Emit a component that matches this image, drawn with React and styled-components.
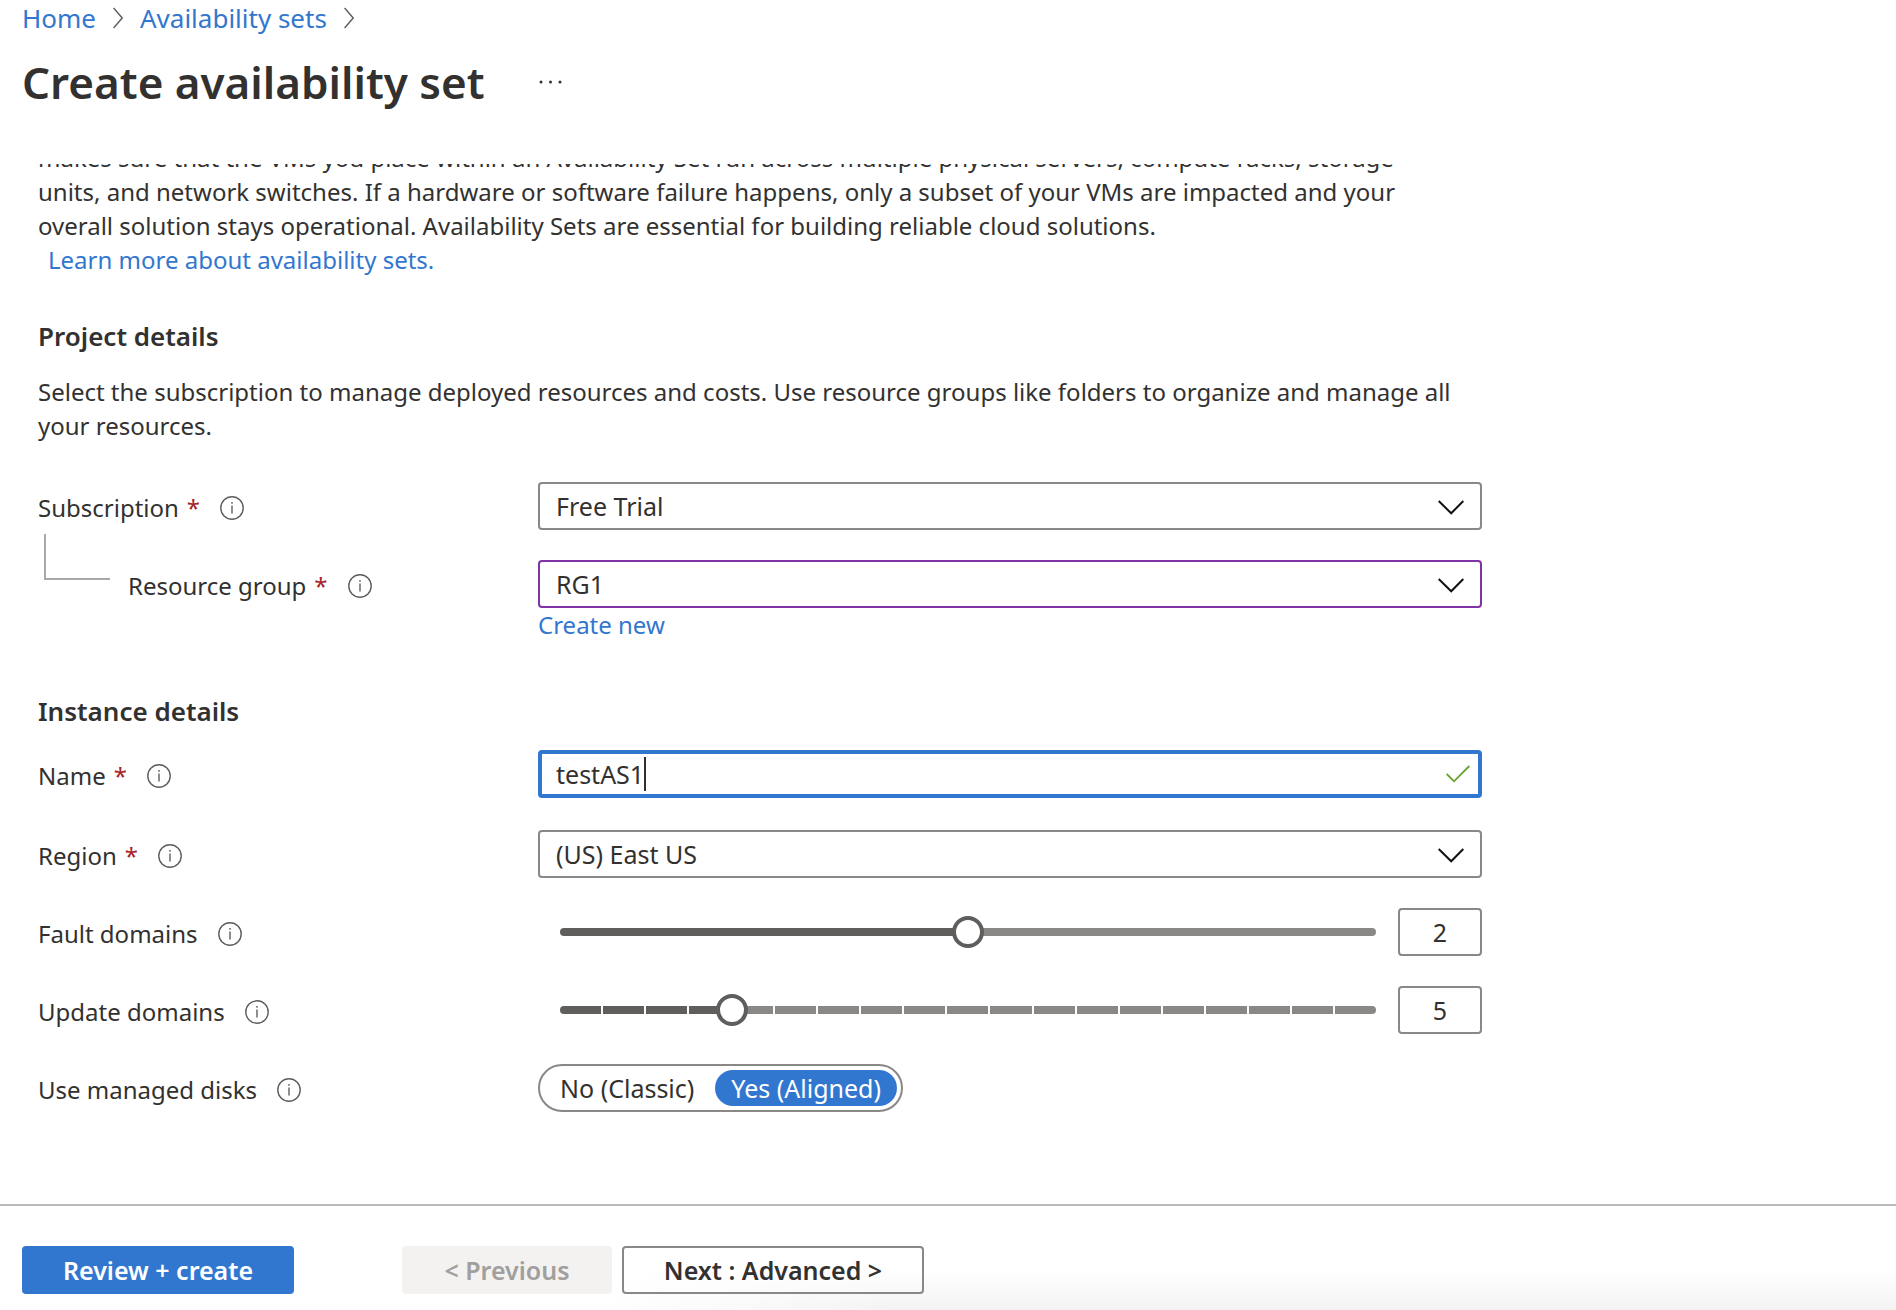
import React, { useState } from "react";
import styled, { createGlobalStyle } from "styled-components";

const c = {
  text: "#323130",
  link: "#3277cf",
  border: "#8a8886",
  dark: "#605e5c",
  purple: "#8132a3",
  red: "#a4262c",
  green: "#6aa22c",
};

const GlobalStyle = createGlobalStyle`
  *, *::before, *::after { box-sizing: border-box; }
  body { margin: 0; background: #fff; }
  body, button, input, select {
    font-family: "Noto Sans", "Open Sans", "Liberation Sans", sans-serif;
    font-size: 24px;
    line-height: 34px;
    color: ${c.text};
  }
`;

const Page = styled.div`
  min-height: 100vh;
  display: flex;
  flex-direction: column;
`;

const Header = styled.header`
  padding: 1px 22px 0;
  height: 164px;
`;

const Breadcrumb = styled.nav`
  display: flex;
  align-items: center;
  gap: 17px;
  font-size: 26px;
`;

const Link = styled.a`
  color: ${c.link};
  text-decoration: none;
`;

const TitleRow = styled.div`
  display: flex;
  align-items: center;
  gap: 50px;
  margin-top: 15px;
`;

const Title = styled.h1`
  margin: 0;
  font-size: 44px;
  line-height: 64px;
  font-weight: 600;
`;

const IconButton = styled.button`
  display: flex;
  padding: 4px;
  border: 0;
  background: none;
`;

const Main = styled.main`
  flex: 1;
  overflow: hidden;
  padding: 0 38px 92px;
`;

const Form = styled.form`
  max-width: 1444px;
  margin-top: -23px;
`;

const Text = styled.p`
  margin: 0;
`;

const Intro = styled(Text)`
  max-width: 1400px;
`;

const LearnMore = styled(Link)`
  display: block;
  padding-left: 10px;
`;

const SectionTitle = styled.h2`
  margin: ${(p) => p.$top}px 0 22px;
  font-size: 26px;
  line-height: 34px;
  font-weight: 600;
`;

const Rows = styled.div`
  display: grid;
  gap: 30px;
  margin-top: ${(p) => p.$top || 0}px;
`;

const Row = styled.div`
  display: grid;
  grid-template-columns: 500px minmax(0, 1fr);
  align-items: start;
`;

const LabelCell = styled.div`
  position: relative;
  display: flex;
  align-items: center;
  height: 48px;
  padding-top: 3px;
  padding-left: ${(p) => (p.$nested ? 90 : 0)}px;
`;

const Branch = styled.span`
  position: absolute;
  left: 6px;
  top: -26px;
  width: 66px;
  height: 46px;
  border-left: 2px solid #a8a8a8;
  border-bottom: 2px solid #a8a8a8;
`;

const Required = styled.span`
  margin-left: 8px;
  color: ${c.red};
`;

const InfoButton = styled(IconButton)`
  padding: 0;
  margin-left: 20px;
`;

const Control = styled.div`
  position: relative;
  display: flex;
  align-items: center;
  height: 48px;
  margin-bottom: ${(p) => (p.$focus ? 2 : 0)}px;
  border: ${(p) => (p.$focus ? 4 : 2)}px solid
    ${(p) => (p.$focus ? c.link : p.$edited ? c.purple : c.border)};
  border-radius: 4px;
  padding: 0 ${(p) => (p.$focus ? 8 : 0)}px 0 ${(p) => (p.$focus ? 14 : 0)}px;
`;

const Select = styled.select`
  appearance: none;
  width: 100%;
  height: 44px;
  padding: 0 60px 0 16px;
  border: 0;
  outline: 0;
  background: transparent;
  font-size: 25px;
`;

const Caret = styled.svg`
  position: absolute;
  right: 16px;
  top: 16px;
  pointer-events: none;
`;

const NameInput = styled.input`
  field-sizing: content;
  min-width: 2px;
  height: 40px;
  padding: 0;
  border: 0;
  outline: 0;
  background: none;
  font-size: 25px;
  caret-color: transparent;
`;

const Cursor = styled.span`
  width: 2px;
  height: 34px;
  background: ${c.text};
`;

const Check = styled.svg`
  margin-left: auto;
`;

const SliderRow = styled.div`
  display: flex;
  align-items: center;
  gap: 22px;
  padding-left: 22px;
`;

const Rail = styled.div`
  position: relative;
  flex: 1;
  display: flex;
  gap: ${(p) => p.$gap}px;
  height: 8px;
`;

const Segment = styled.span`
  flex: 1;
  background: ${(p) => (p.$on ? c.dark : c.border)};
  &:first-child { border-radius: 4px 0 0 4px; }
  &:nth-last-child(2) { border-radius: 0 4px 4px 0; }
`;

const Range = styled.input`
  appearance: none;
  position: absolute;
  left: -16px;
  top: -12px;
  width: calc(100% + 32px);
  height: 32px;
  margin: 0;
  background: transparent;
  &::-webkit-slider-thumb {
    appearance: none;
    width: 32px;
    height: 32px;
    border: 4px solid ${c.dark};
    border-radius: 50%;
    background: #fff;
  }
`;

const NumberInput = styled.input`
  width: 84px;
  height: 48px;
  padding: 0;
  border: 2px solid ${c.border};
  border-radius: 4px;
  text-align: center;
  font-size: 25px;
`;

const Toggle = styled.div`
  display: inline-flex;
  align-items: center;
  justify-self: start;
  gap: 5px;
  height: 48px;
  padding: 0 4px;
  border: 2px solid ${c.border};
  border-radius: 24px;
  font-size: 25px;
`;

const Option = styled.label`
  display: flex;
  align-items: center;
  height: 36px;
  padding: 0 16px;
  border-radius: 18px;
  cursor: pointer;
  &:has(:checked) { background: ${c.link}; color: #fff; }
  input {
    position: absolute;
    opacity: 0;
    width: 1px;
    height: 1px;
    margin: 0;
  }
`;

const Footer = styled.footer`
  display: flex;
  gap: 10px;
  padding: 40px 22px 16px;
  border-top: 2px solid #bababa;
  background:
    linear-gradient(to right, #fff 600px, transparent 900px),
    linear-gradient(to bottom, #fff 60%, #f3f3f3);
`;

const Button = styled.button`
  height: 48px;
  min-width: ${(p) => p.$width}px;
  padding: 0 16px;
  border: 2px solid ${c.border};
  border-radius: 4px;
  background: transparent;
  font-size: 25px;
  font-weight: 600;
  &:disabled { border-color: #f3f2f1; background: #f3f2f1; color: #a19f9d; }
`;

const PrimaryButton = styled(Button)`
  margin-right: 98px;
  border-color: ${c.link};
  background: ${c.link};
  color: #fff;
`;

const Crumb = () => (
  <svg width="10" height="22" viewBox="0 0 10 22" fill="none" stroke="#605e5c" strokeWidth="1.4" aria-hidden="true">
    <path d="M.6 1 9.2 11 .6 21" />
  </svg>
);

const Chevron = () => (
  <Caret width="26" height="15" viewBox="0 0 26 15" fill="none" stroke="#111" strokeWidth="2" aria-hidden="true">
    <path d="M.7 1 13.2 13.3 25.3 1" />
  </Caret>
);

function Label({ htmlFor, id, required, nested, children }) {
  return (
    <LabelCell $nested={nested}>
      {nested && <Branch />}
      <label htmlFor={htmlFor} id={id}>
        {children}
        {required && <Required>*</Required>}
      </label>
      <InfoButton type="button" aria-label={`About ${children}`}>
        <svg width="24" height="24" viewBox="0 0 24 24" fill="none" stroke="#605e5c" strokeWidth="1.4">
          <circle cx="12" cy="12" r="11.2" />
          <path d="M12 9.5v8M12 6v1.8" />
        </svg>
      </InfoButton>
    </LabelCell>
  );
}

function SelectRow({ id, label, value, nested, edited, children }) {
  return (
    <Row>
      <Label htmlFor={id} required nested={nested}>{label}</Label>
      <div>
        <Control $edited={edited}>
          <Select id={id} defaultValue={value}>
            <option>{value}</option>
          </Select>
          <Chevron />
        </Control>
        {children}
      </div>
    </Row>
  );
}

function SliderField({ id, label, initial, max, ticks }) {
  const [value, setValue] = useState(initial);
  const onChange = (e) => setValue(Number(e.target.value));
  return (
    <Row>
      <Label htmlFor={id}>{label}</Label>
      <SliderRow>
        <Rail $gap={ticks ? 2 : 0}>
          {Array.from({ length: max - 1 }, (_, i) => (
            <Segment key={i} $on={i < value - 1} />
          ))}
          <Range id={id} type="range" min="1" max={max} value={value} onChange={onChange} />
        </Rail>
        <NumberInput aria-label={`${label} value`} inputMode="numeric" value={value} onChange={onChange} />
      </SliderRow>
    </Row>
  );
}

export default function App() {
  const [name, setName] = useState("testAS1");
  return (
    <Page>
      <GlobalStyle />
      <Header>
        <Breadcrumb aria-label="Breadcrumb">
          <Link href="#home">Home</Link>
          <Crumb />
          <Link href="#sets">Availability sets</Link>
          <Crumb />
        </Breadcrumb>
        <TitleRow>
          <Title>Create availability set</Title>
          <IconButton type="button" aria-label="More actions">
            <svg width="24" height="4" viewBox="0 0 24 4" fill="#323130">
              <circle cx="2" cy="2" r="1.5" />
              <circle cx="11.5" cy="2" r="1.5" />
              <circle cx="21" cy="2" r="1.5" />
            </svg>
          </IconButton>
        </TitleRow>
      </Header>
      <Main>
        <Form>
          <Intro>
            makes sure that the VMs you place within an Availability Set run across multiple physical servers,
            compute racks, storage units, and network switches. If a hardware or software failure happens, only a
            subset of your VMs are impacted and your overall solution stays operational. Availability Sets are
            essential for building reliable cloud solutions.
          </Intro>
          <LearnMore href="#learn">Learn more about availability sets.</LearnMore>

          <SectionTitle $top={42}>Project details</SectionTitle>
          <Text>
            Select the subscription to manage deployed resources and costs. Use resource groups like folders to
            organize and manage all your resources.
          </Text>
          <Rows $top={39}>
            <SelectRow id="subscription" label="Subscription" value="Free Trial" />
            <SelectRow id="group" label="Resource group" value="RG1" nested edited>
              <Link href="#new">Create new</Link>
            </SelectRow>
          </Rows>

          <SectionTitle $top={52}>Instance details</SectionTitle>
          <Rows>
            <Row>
              <Label htmlFor="name" required>Name</Label>
              <Control $focus>
                <NameInput id="name" value={name} onChange={(e) => setName(e.target.value)} />
                <Cursor />
                <Check width="24" height="18" viewBox="0 0 24 18" fill="none" stroke={c.green} strokeWidth="1.8" aria-hidden="true">
                  <path d="M.7 9 8 16.3 23.3 1" />
                </Check>
              </Control>
            </Row>
            <SelectRow id="region" label="Region" value="(US) East US" />
            <SliderField id="fault" label="Fault domains" initial={2} max={3} />
            <SliderField id="update" label="Update domains" initial={5} max={20} ticks />
            <Row>
              <Label id="disks">Use managed disks</Label>
              <Toggle role="radiogroup" aria-labelledby="disks">
                <Option><input type="radio" name="disks" />No (Classic)</Option>
                <Option><input type="radio" name="disks" defaultChecked />Yes (Aligned)</Option>
              </Toggle>
            </Row>
          </Rows>
        </Form>
      </Main>
      <Footer>
        <PrimaryButton type="button" $width={272}>Review + create</PrimaryButton>
        <Button type="button" $width={210} disabled>&lt; Previous</Button>
        <Button type="button" $width={302}>Next : Advanced &gt;</Button>
      </Footer>
    </Page>
  );
}
